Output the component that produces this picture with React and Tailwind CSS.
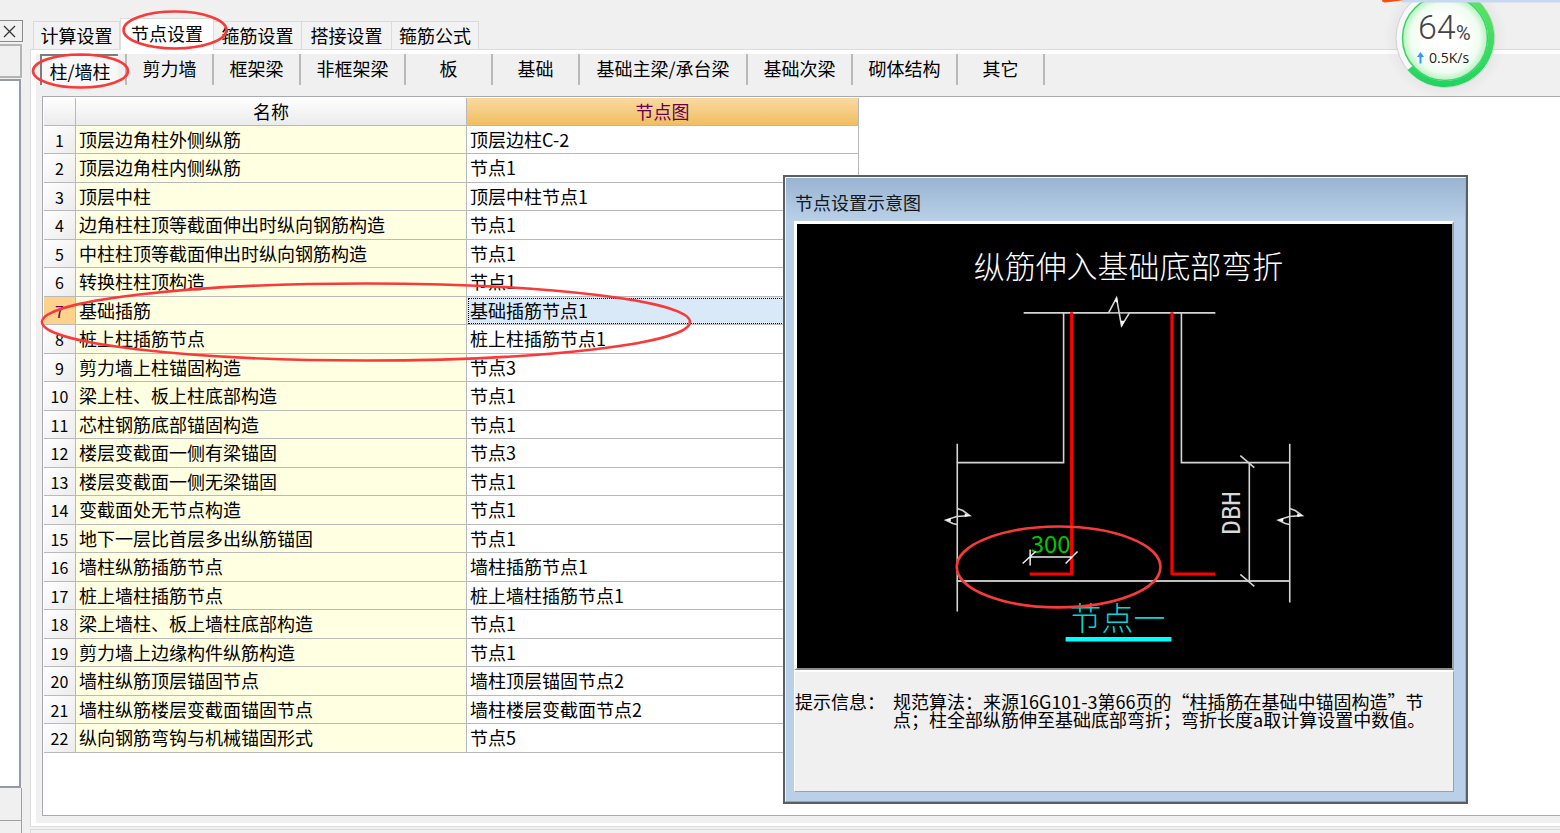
import React from "react";

const rows = [
  ["顶层边角柱外侧纵筋", "顶层边柱C-2"],
  ["顶层边角柱内侧纵筋", "节点1"],
  ["顶层中柱", "顶层中柱节点1"],
  ["边角柱柱顶等截面伸出时纵向钢筋构造", "节点1"],
  ["中柱柱顶等截面伸出时纵向钢筋构造", "节点1"],
  ["转换柱柱顶构造", "节点1"],
  ["基础插筋", "基础插筋节点1"],
  ["桩上柱插筋节点", "桩上柱插筋节点1"],
  ["剪力墙上柱锚固构造", "节点3"],
  ["梁上柱、板上柱底部构造", "节点1"],
  ["芯柱钢筋底部锚固构造", "节点1"],
  ["楼层变截面一侧有梁锚固", "节点3"],
  ["楼层变截面一侧无梁锚固", "节点1"],
  ["变截面处无节点构造", "节点1"],
  ["地下一层比首层多出纵筋锚固", "节点1"],
  ["墙柱纵筋插筋节点", "墙柱插筋节点1"],
  ["桩上墙柱插筋节点", "桩上墙柱插筋节点1"],
  ["梁上墙柱、板上墙柱底部构造", "节点1"],
  ["剪力墙上边缘构件纵筋构造", "节点1"],
  ["墙柱纵筋顶层锚固节点", "墙柱顶层锚固节点2"],
  ["墙柱纵筋楼层变截面锚固节点", "墙柱楼层变截面节点2"],
  ["纵向钢筋弯钩与机械锚固形式", "节点5"],
];

const tabs = [
  ["计算设置", "w-[87px]"],
  ["节点设置", "w-[94px]"],
  ["箍筋设置", "w-[88px]"],
  ["搭接设置", "w-[90px]"],
  ["箍筋公式", "w-[87px]"],
];

const members = [
  ["柱/墙柱", "w-[87px]"],
  ["剪力墙", "w-[87px]"],
  ["框架梁", "w-[87px]"],
  ["非框架梁", "w-[105px]"],
  ["板", "w-[87px]"],
  ["基础", "w-[87px]"],
  ["基础主梁/承台梁", "w-[168px]"],
  ["基础次梁", "w-[105px]"],
  ["砌体结构", "w-[105px]"],
  ["其它", "w-[87px]"],
];

function LeftDock() {
  return (
    <aside className="flex w-[23px] shrink-0 flex-col pt-5">
      <button
        aria-label="关闭"
        className="flex h-[22px] w-full items-center border border-l-0 border-[#8c8c8c] bg-[#f0f0f0] pl-[3px]"
      >
        <svg width="13" height="13" viewBox="0 0 13 13" stroke="#333" strokeWidth="1.3">
          <path d="M1 1L12 12M12 1L1 12" />
        </svg>
      </button>
      <div className="mt-[2px] h-[34px] w-[22px] border-2 border-l-0 border-[#b4b4b4]" />
      <div className="mt-px w-[21px] flex-1 border-y-2 border-r-2 border-[#969ca5] bg-white" />
      <div className="h-[33px] w-[22px] border-b border-r border-[#a0a0a0]" />
      <div className="h-3 w-[22px] border-r border-[#a0a0a0]" />
    </aside>
  );
}

function TabBar() {
  return (
    <div role="tablist" className="relative z-10 flex h-[49px] items-end pl-[3px]">
      {tabs.map(([label, width], i) =>
        i === 1 ? (
          <button
            key={label}
            role="tab"
            aria-selected="true"
            className={`${width} -mb-px h-8 border border-b-0 border-[#dcdcdc] bg-white pb-1 text-center`}
          >
            {label}
          </button>
        ) : (
          <button
            key={label}
            role="tab"
            aria-selected="false"
            className={`${width} h-[28px] border border-b-0 border-l-0 border-[#dadada] bg-[#f2f2f2] pb-[2px] text-center first:border-l`}
          >
            {label}
          </button>
        )
      )}
    </div>
  );
}

function MemberBar() {
  return (
    <div className="flex h-[31px] pl-1">
      {members.map(([label, width], i) => (
        <div key={label} className={`${width} flex border-r-2 border-[#b9b9b9]`}>
          {i === 0 ? (
            <button
              aria-pressed="true"
              className="mr-[7px] flex-1 border-l-2 border-t-2 border-[#7d7d7d] bg-[#f8f8f8]"
            >
              {label}
            </button>
          ) : (
            <button className="flex-1 pb-[3px] whitespace-nowrap">{label}</button>
          )}
        </div>
      ))}
    </div>
  );
}

function NodeTable() {
  return (
    <table className="w-[815px] table-fixed border-separate border-spacing-0">
      <colgroup>
        <col className="w-[32px]" />
        <col className="w-[391px]" />
        <col className="w-[392px]" />
      </colgroup>
      <thead>
        <tr className="h-[28px]">
          <th className="border-b border-r border-[#b9b9b9] bg-linear-to-b from-white to-[#ebebeb] p-0" />
          <th className="border-b border-r border-[#b9b9b9] bg-linear-to-b from-white to-[#ebebeb] p-0 pb-[2px] font-normal">
            名称
          </th>
          <th className="border-b border-r border-[#b9b9b9] bg-linear-to-b from-[#fad9a0] to-[#f0be60] p-0 pb-[2px] font-normal text-[#660052]">
            节点图
          </th>
        </tr>
      </thead>
      <tbody>
        {rows.map(([name, node], i) => (
          <tr key={i} className="odd:h-[28px] even:h-[29px]">
            <th
              className={
                i === 6
                  ? "border-b border-r border-[#b9b9b9] bg-[#ffd28c] p-0 text-base leading-none font-normal text-[#660052]"
                  : "border-b border-r border-[#b9b9b9] bg-linear-to-br from-white to-[#ececec] p-0 text-base leading-none font-normal"
              }
            >
              {i + 1}
            </th>
            <td className="border-b border-r border-[#b9b9b9] bg-[#ffffe1] pt-0 pr-0 pb-[2px] pl-[3px]">{name}</td>
            <td
              className={
                i === 6
                  ? "border-b border-r border-[#b9b9b9] bg-[#d9e9f7] pt-0 pr-0 pb-[2px] pl-[3px] outline-1 -outline-offset-2 outline-dotted outline-black"
                  : "border-b border-r border-[#b9b9b9] bg-white pt-0 pr-0 pb-[2px] pl-[3px]"
              }
            >
              {node}
            </td>
          </tr>
        ))}
      </tbody>
    </table>
  );
}

function NodeDrawing() {
  return (
    <svg viewBox="797 224 656 445" className="block w-full bg-black" fill="none">
      <g fontFamily="'Noto Sans CJK SC', sans-serif">
        <text x="1129" y="278" fontSize="31" fontWeight="300" textAnchor="middle" fill="#ffffff">
          纵筋伸入基础底部弯折
        </text>
        <text x="1031" y="554" fontSize="24" fill="#00c800">
          300
        </text>
        <text x="1070" y="631" fontSize="32" fontWeight="300" fill="#00d8d8">
          节点一
        </text>
      </g>
      <text
        transform="translate(1241 535) rotate(-90)"
        fontFamily="'DejaVu Sans Mono', monospace"
        fontSize="24"
        fill="#d8d8d8"
      >
        DBH
      </text>
      <g stroke="#d4d4d4" strokeWidth="1.6">
        <path d="M1024 313H1109L1117 298L1122 326L1130 313H1216" />
        <path d="M1064 313V463H957M1182 313V463H1290" />
        <path d="M957 581.500H1290" stroke="#fff" />
        <path d="M957.500 444V612M1290.500 444V603" />
        <path d="M957.500 509L963 511L970 516L957 517L946 520.500L953 524L957.500 525" />
        <path d="M1290.500 509L1296 511L1303 516L1290 517L1279 520.500L1286 524L1290.500 525" />
        <path d="M1250 463V581M1241 456L1255 468M1241 575L1255 587" />
      </g>
      <path d="M1109 313H1130" stroke="#d4d4d4" strokeWidth="1.500" />
      <path d="M965 514L970.500 516L965 517.500ZM951 518.500L946 520.500L951 522ZM1298 514L1303.500 516L1298 517.500ZM1284 518.500L1279 520.500L1284 522ZM1115 301L1117.500 297L1118.500 303ZM1121 321L1122.500 327L1125 321Z" fill="#fff" />
      <g stroke="#ff0000" strokeWidth="3" strokeLinejoin="round">
        <path d="M1072 312.500V574.500H1030" />
        <path d="M1172.500 312.500V574.500H1216" />
      </g>
      <g stroke="#f0f0f0" strokeWidth="1.500">
        <path d="M1031 557.500H1072M1030.500 550V566M1023 564L1036 552M1066 564L1078 552" />
      </g>
      <path d="M1066 640H1172" stroke="#00ffff" strokeWidth="4.500" />
      <ellipse cx="1059" cy="567.500" rx="102" ry="40.500" stroke="#f93a3a" strokeWidth="2.600" />
    </svg>
  );
}

function NodeDialog() {
  return (
    <section
      aria-label="节点设置示意图"
      className="absolute top-[175px] left-[783px] w-[685px] border-2 border-[#5a5f64] bg-[#b9d0e8]"
    >
      <div className="border border-t-[#f4f8fc] border-r-[#55d0e8] border-b-[#45c4dc] border-l-[#eaf2fa]">
        <h2 className="h-[43px] bg-linear-to-b from-[#99b4d1] to-[#b9d0e8] pt-[11px] pl-[9px] text-[18px] leading-[27px] font-normal text-[#101820]">
          节点设置示意图
        </h2>
        <div className="mr-[11px] mb-[9px] ml-2">
          <div className="border-t-3 border-r-2 border-b-2 border-l-3 border-t-white border-r-[#a0a0a0] border-b-[#8c8c8c] border-l-white">
            <NodeDrawing />
          </div>
          <div className="flex h-[122px] border border-t-2 border-white border-r-[#a0a0a0] border-b-[#a0a0a0] bg-[#f0f0f0] pt-5 text-[18px] leading-[18px]">
            <span className="w-[98px] shrink-0">提示信息：</span>
            <p className="whitespace-nowrap">
              规范算法：来源16G101-3第66页的“柱插筋在基础中锚固构造”节
              <br />
              点；柱全部纵筋伸至基础底部弯折；弯折长度a取计算设置中数值。
            </p>
          </div>
        </div>
      </div>
    </section>
  );
}

function SpeedBall() {
  return (
    <div className="absolute top-0 right-0 h-[110px] w-[180px]">
      <svg width="180" height="110" viewBox="1380 0 180 110" fill="none">
        <defs>
          <radialGradient id="ball">
            <stop offset="0.5" stopColor="#ffffff" />
            <stop offset="0.82" stopColor="#effcf0" />
            <stop offset="1" stopColor="#b4f0bd" />
          </radialGradient>
          <linearGradient id="ring" x1="0" y1="0" x2="0" y2="1">
            <stop offset="0" stopColor="#66e664" />
            <stop offset="1" stopColor="#1fd460" />
          </linearGradient>
          <radialGradient id="glow">
            <stop offset="0.78" stopColor="#000" stopOpacity="0.04" />
            <stop offset="1" stopColor="#000" stopOpacity="0" />
          </radialGradient>
        </defs>
        <circle cx="1445.500" cy="38" r="62" fill="url(#glow)" />
        <circle cx="1445.500" cy="38" r="49.500" fill="#f8f8f8" stroke="#d2d2d2" />
        <path d="M1445.500 -12A49.500 49.500 0 1 1 1407.500 70L1412.500 66A43 43 0 1 0 1445.500 -5Z" fill="url(#ring)" />
        <circle cx="1445" cy="38" r="42.500" fill="url(#ball)" stroke="#35d566" strokeWidth="1.500" />
        <path d="M1402 0H1560V2.500H1402Z" fill="#c8d8f0" />
        <path d="M1382 0H1404L1398 1L1385 2.500Q1382 2 1382 0Z" fill="#ff4a10" />
        <path d="M1420.500 52L1424 57H1421.500V63.500H1419.500V57H1417Z" fill="#3399ff" />
        <g fontFamily="Roboto, sans-serif" fill="#444">
          <text x="1418" y="39" fontSize="34" fontWeight="300">
            64
          </text>
          <text x="1456" y="40" fontSize="20">
            %
          </text>
        </g>
        <text x="1429" y="63" fontSize="14" fontFamily="'Open Sans', sans-serif" fill="#222">
          0.5K/s
        </text>
      </svg>
    </div>
  );
}

export default function App() {
  return (
    <div className="relative flex min-h-screen overflow-hidden bg-[#f0f0f0] font-['Noto_Sans_CJK_SC',sans-serif] text-[18px] leading-[24px] text-black">
      <LeftDock />
      <main className="ml-[7px] flex min-w-0 flex-1 flex-col">
        <TabBar />
        <div className="flex flex-1 flex-col border-y border-l border-[#dcdcdc]">
          <div className="flex flex-1 flex-col border-t-4 border-b-3 border-l-5 border-white">
            <MemberBar />
            <div className="mt-[11px] mb-[7px] ml-[6px] flex-1 border-y border-l border-[#a9a9b4] bg-white pt-px pl-px">
              <NodeTable />
            </div>
          </div>
        </div>
        <div className="mt-[2px] h-1 border-t border-l border-[#dcdcdc] bg-[#f0f0f0]" />
      </main>
      <svg
        className="pointer-events-none absolute top-0 left-0 z-10"
        width="720"
        height="380"
        fill="none"
        stroke="#f93a3a"
        strokeWidth="2.600"
      >
        <ellipse cx="175" cy="30" rx="51.500" ry="18.500" />
        <ellipse cx="80.500" cy="71" rx="47.500" ry="16.500" />
        <ellipse cx="366" cy="322" rx="324" ry="38.500" />
      </svg>
      <NodeDialog />
      <SpeedBall />
    </div>
  );
}
